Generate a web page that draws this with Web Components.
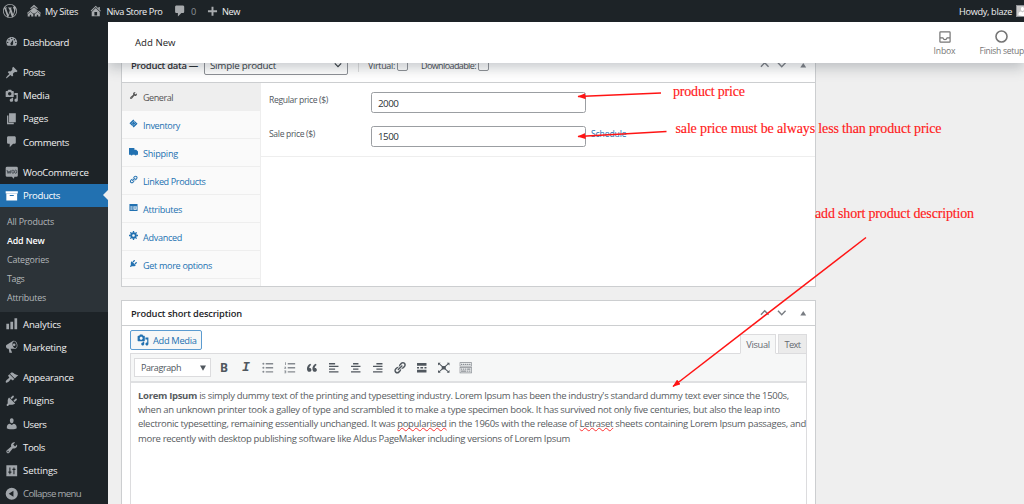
<!DOCTYPE html>
<html lang="en">
<head>
<meta charset="utf-8">
<title>Add New</title>
<style>
    html, body { margin: 0; height: 504px; overflow: hidden; }
    body { background: #efefef; font-family: "Open Sans", "Noto Sans", sans-serif; font-size: 9.5px; color: #50575e; }
</style>
</head>
<body>
<store-admin></store-admin>
<script>
const ICONS = {
    wordpress: '<path d="M20 10c0-5.51-4.49-10-10-10C4.48 0 0 4.49 0 10c0 5.52 4.48 10 10 10 5.51 0 10-4.48 10-10zM7.78 15.37L4.37 6.22c.55-.02 1.17-.08 1.17-.08.5-.06.44-1.13-.06-1.11 0 0-1.45.11-2.37.11-.18 0-.37 0-.58-.01C4.12 2.69 6.87 1.11 10 1.11c2.33 0 4.45.87 6.05 2.34-.68-.11-1.65.39-1.65 1.58 0 .74.45 1.36.9 2.1.35.61.55 1.36.55 2.46 0 1.49-1.4 5-1.4 5l-3.03-8.37c.54-.02.82-.17.82-.17.5-.05.44-1.25-.06-1.22 0 0-1.44.12-2.38.12-.87 0-2.33-.12-2.33-.12-.5-.03-.56 1.2-.06 1.22l.92.08 1.26 3.41zM17.41 10c.24-.64.74-1.87.43-4.25.7 1.29 1.05 2.71 1.05 4.25 0 3.29-1.73 6.24-4.4 7.78.97-2.59 1.94-5.2 2.92-7.78zM6.1 18.09C3.12 16.65 1.11 13.53 1.11 10c0-1.3.23-2.48.72-3.59C3.25 10.3 4.67 14.2 6.1 18.09zm4.03-6.63l2.58 6.98c-.86.29-1.76.45-2.71.45-.79 0-1.57-.11-2.29-.33.81-2.38 1.62-4.74 2.42-7.1z"/>',
    sites: '<path d="M10 1.200l5.500 5-1 1L10 3.500 5.500 7.200l-1-1zM6 8l4-3.500L14 8v2l-4 3-4-3zM5 8.500l5 4.500-.8 1L5 10.500.8 14 0 13zM15 8.500l5 4.500-.8 1-4.200-3.500-4.200 3.500-.8-1zM1 14.500L5 11l4 3.500V18H6v-2.500H4V18H1zM11 14.500l4-3.500 4 3.500V18h-3v-2.500h-2V18h-3z"/>',
    home: '<path d="M16 8.5l1.53 1.53-1.06 1.06L10 4.6l-6.47 6.49-1.06-1.06L10 2.5l4 4v-2h2v4zm-6-2.46l6 5.99V18H4v-5.97zM12 17v-5H8v5h4z"/>',
    comment: '<path d="M5 2h9c1.1 0 2 .9 2 2v7c0 1.1-.9 2-2 2h-2l-5 5v-5H5c-1.1 0-2-.9-2-2V4c0-1.1.9-2 2-2z"/>',
    plus: '<path d="M17 8v3h-5.500v5.500h-3V11H3V8h5.500V2.500h3V8z"/>',
    dashboard: '<path fill-rule="evenodd" d="M3.76 16h12.48c1.1-1.37 1.76-3.11 1.76-5 0-4.42-3.58-8-8-8s-8 3.58-8 8c0 1.89.66 3.63 1.76 5zM10 4c.55 0 1 .45 1 1s-.45 1-1 1-1-.45-1-1 .45-1 1-1zM6 6c.55 0 1 .45 1 1s-.45 1-1 1-1-.45-1-1 .45-1 1-1zm8 0c.55 0 1 .45 1 1s-.45 1-1 1-1-.45-1-1 .45-1 1-1zm-5.370 5.550L12 7v6c0 1.100-.9 2-2 2s-2-.9-2-2c0-.57.24-1.080.63-1.450zM4 10c.55 0 1 .45 1 1s-.45 1-1 1-1-.45-1-1 .45-1 1-1zm12 0c.55 0 1 .45 1 1s-.45 1-1 1-1-.45-1-1 .45-1 1-1z"/>',
    post: '<path d="M10.44 3.02l1.82-1.82 6.36 6.35-1.83 1.82c-1.05-.68-2.48-.57-3.41.36l-.75.75c-.92.93-1.04 2.35-.35 3.41l-1.83 1.82-2.41-2.41-2.8 2.79c-.42.42-3.38 2.71-3.8 2.29s1.86-3.39 2.28-3.81l2.79-2.79L4.1 9.36l1.83-1.82c1.05.69 2.48.57 3.4-.36l.75-.75c.93-.92 1.05-2.35.36-3.41z"/>',
    media: '<path d="M13 11V4c0-.55-.45-1-1-1h-1.67L9 1H5L3.67 3H2c-.55 0-1 .45-1 1v7c0 .55.45 1 1 1h10c.55 0 1-.45 1-1zM7 4.500c1.380 0 2.500 1.120 2.500 2.500S8.380 9.500 7 9.500 4.500 8.380 4.500 7 5.620 4.500 7 4.500zM14 6h5v10.500c0 1.380-1.120 2.500-2.500 2.500S14 17.880 14 16.500s1.120-2.500 2.500-2.500c.17 0 .34.02.5.05V9h-3V6zm-4 8.050V13h2v3.500c0 1.380-1.120 2.500-2.500 2.500S7 17.880 7 16.500 8.120 14 9.500 14c.17 0 .34.02.5.05z" fill-rule="evenodd"/>',
    page: '<path d="M6 15V2h10v13H6zm-1 1h8v2H3V5h2v11z"/>',
    woo: '<path fill-rule="evenodd" d="M3 1h14q2 0 2 2v11q0 2-2 2h-3l-1 3-3-3H3q-2 0-2-2V3q0-2 2-2z"/><path d="M3 6l1.500 5L6 7.500 7.500 11 9 6" fill="none" stroke="#3c434a" stroke-width="1.300"/><ellipse cx="11.800" cy="8.500" rx="1.600" ry="2.500" fill="none" stroke="#3c434a" stroke-width="1.200"/><ellipse cx="15.800" cy="8.500" rx="1.500" ry="2.500" fill="none" stroke="#3c434a" stroke-width="1.200"/>',
    archive: '<path d="M19 3.500v3H1v-3h18zM2 7h16v10H2V7zm11 3.500V9H7v1.500h6z"/>',
    chart: '<path d="M18 18V2h-4v16h4zm-6 0V7H8v11h4zm-6 0v-8H2v8h4z"/>',
    megaphone: '<path d="M18.15 5.94c.46 1.62.38 3.22-.02 4.48-.42 1.28-1.26 2.18-2.3 2.48-.16.06-.26.06-.4.06-.06.02-.12.02-.18.02-.06.02-.14.02-.22.02h-6.8l2.22 5.5c.02.14-.06.26-.14.34-.08.1-.24.16-.34.16H6.950c-.1 0-.26-.06-.34-.16-.08-.08-.16-.2-.14-.34l-1-5.500H4.250l-.02-.02c-.5.06-1.080-.18-1.540-.62s-.88-1.080-1.060-1.880c-.24-.8-.2-1.560-.02-2.200.18-.62.58-1.080 1.060-1.300l.02-.02 9-5.400c.1-.06.18-.1.24-.16.06-.04.14-.08.24-.12.16-.08.28-.12.5-.18 1.040-.3 2.240.1 3.220.98s1.840 2.240 2.260 3.860zm-2.580 5.980h-.02c.4-.1.74-.34 1.040-.7.58-.7.86-1.760.86-3.040 0-.64-.1-1.300-.28-1.980-.34-1.360-1.020-2.500-1.780-3.240s-1.680-1.100-2.460-.88c-.82.22-1.400.96-1.700 2-.32 1.040-.28 2.360.06 3.720.38 1.360 1 2.500 1.800 3.240.78.74 1.620 1.100 2.480.88z" fill-rule="evenodd"/><circle cx="13.500" cy="7" r="2"/>',
    brush: '<path d="M14.48 11.06L7.41 3.99l1.5-1.5c.5-.56 2.3-.47 3.51.32 1.21.8 1.43 1.28 2.91 2.1 1.18.64 2.45 1.26 4.45.85zm-.71.71L6.7 4.7 4.93 6.47c-.39.39-.39 1.02 0 1.41l1.06 1.06c.39.39.39 1.03 0 1.42-.6.6-1.43 1.11-2.21 1.69-.35.26-.7.53-1.01.84C1.43 14.23.4 16.08 1.4 17.07c.99 1 2.84-.03 4.18-1.36.31-.31.58-.66.85-1.02.57-.78 1.08-1.61 1.69-2.21.39-.39 1.02-.39 1.41 0l1.06 1.06c.39.39 1.02.39 1.41 0z"/>',
    plug: '<path d="M13.11 4.36L9.87 7.6 8 5.73l3.24-3.24c.35-.34 1.05-.2 1.56.32.52.51.66 1.21.31 1.55zm-8 1.77l.91-1.12 9.01 9.01-1.19.84c-.71.71-2.63 1.16-3.82 1.16H6.14L4.9 17.26c-.59.59-1.54.59-2.12 0-.59-.58-.59-1.53 0-2.12l1.24-1.24v-3.88c0-1.13.4-3.19 1.09-3.89zm7.26 3.97l3.24-3.24c.34-.35 1.04-.21 1.55.31.52.51.66 1.21.31 1.55l-3.24 3.25z"/>',
    user: '<path d="M10 9.25c-2.27 0-2.73-3.44-2.73-3.44C7 4.02 7.82 2 9.97 2c2.16 0 2.98 2.02 2.71 3.81 0 0-.41 3.44-2.68 3.44zm0 2.57L12.72 10c2.39 0 4.52 2.33 4.52 4.53v2.49s-3.65 1.13-7.24 1.13c-3.65 0-7.24-1.13-7.24-1.13v-2.49c0-2.25 1.94-4.48 4.47-4.48z"/>',
    wrench: '<path d="M16.68 9.77c-1.34 1.34-3.3 1.67-4.95.99l-5.41 6.52c-.99.99-2.59.99-3.58 0s-.99-2.59 0-3.57l6.52-5.42c-.68-1.65-.35-3.61.99-4.95 1.28-1.28 3.12-1.62 4.72-1.06l-2.89 2.89 2.82 2.82 2.86-2.87c.53 1.58.18 3.39-1.08 4.65zM3.81 16.21c.4.39 1.04.39 1.43 0 .4-.4.4-1.04 0-1.43-.39-.4-1.03-.4-1.43 0-.39.39-.39 1.03 0 1.43z"/>',
    sliders: '<path fill-rule="evenodd" d="M2 2h16v16H2zM6.500 5v6H5v2h1.500v2h1.500v-2h1.500v-2H8V5zM12.500 5v2H11v2h1.500v6H14V9h1.500V7H14V5z"/>',
    collapse: '<path d="M10 1a9 9 0 1 1 0 18 9 9 0 0 1 0-18zm2.500 13.500v-9L5.500 10z" fill-rule="evenodd"/>',
    ticket: '<path d="M1 9.500L9.500 1l2 2a2 2 0 0 0 2.500 2.500l5 5L10.500 19l-2-2A2 2 0 0 0 6 14.500z"/><path d="M6 9.500l4-4 4.500 4.500-4 4z" fill="none" stroke="#fff" stroke-width=".8"/>',
    truck: '<path d="M0 2h12v4h4l4 4v7h-3a2.300 2.300 0 0 1-4.500 0H8a2.300 2.300 0 0 1-4.500 0H0z"/>',
    link: '<path d="M17.74 2.76c1.68 1.69 1.68 4.41 0 6.1l-1.53 1.52c-1.12 1.12-2.7 1.47-4.14 1.09l2.62-2.61.76-.77.76-.76c.84-.84.84-2.2 0-3.04-.84-.85-2.2-.85-3.04 0l-.77.76-3.38 3.38c-.37-1.44-.02-3.02 1.1-4.14l1.52-1.53c1.69-1.68 4.42-1.68 6.1 0zM8.59 13.43l5.34-5.34c.42-.42.42-1.1 0-1.52-.44-.43-1.13-.39-1.53 0l-5.33 5.34c-.42.42-.42 1.1 0 1.52.44.43 1.13.39 1.52 0zm-.76 2.29l4.14-4.15c.38 1.44.03 3.02-1.09 4.14l-1.52 1.53c-1.69 1.68-4.41 1.68-6.1 0-1.68-1.68-1.68-4.42 0-6.1l1.53-1.52c1.12-1.12 2.7-1.47 4.14-1.1l-4.14 4.15c-.85.84-.85 2.2 0 3.05.84.84 2.2.84 3.04 0z"/>',
    table: '<path fill-rule="evenodd" d="M1 2h18v16H1zM3 7v1.500h5V7zM3 10v1.500h5V10zM3 13v1.500h5V13zM10 7v8h7V7zM11.500 8.500h4v1.500h-4zM11.500 12h4v1.500h-4z"/>',
    gear: '<circle cx="10" cy="10" r="5" fill="none" stroke="currentColor" stroke-width="4"/><path d="M8.500 0h3v4h-3zM8.500 16h3v4h-3zM0 8.500h4v3H0zM16 8.500h4v3h-4zM2 4l2-2 3 3-2 2zM13 15l2-2 3 3-2 2zM2 16l3-3 2 2-3 3zM13 5l3-3 2 2-3 3z"/>',
    ul: '<circle cx="3.500" cy="4" r="1.500"/><circle cx="3.500" cy="10" r="1.500"/><circle cx="3.500" cy="16" r="1.500"/><path d="M7 3h11v2H7zM7 9h11v2H7zM7 15h11v2H7z"/>',
    ol: '<path d="M3 2h1.200v4H3zM2 8.500h2.500v1.200L3.200 11h1.500v1H2v-1l1.300-1.500H2zM2 14h2.700v4H2v-1h1.600v-.6H2.500v-.8h1.100V15H2zM7 3h11v2H7zM7 9h11v2H7zM7 15h11v2H7z"/>',
    quote: '<path d="M9.49 13.22c0-.74-.2-1.38-.61-1.9-.62-.78-1.83-.88-2.53-.72-.29-1.65 1.11-3.75 2.92-4.65L7.88 4c-2.73 1.3-5.42 4.28-4.96 8.05C3.21 14.43 4.59 16 6.54 16c.85 0 1.56-.25 2.12-.75s.83-1.18.83-2.03zm8.05 0c0-.74-.2-1.38-.61-1.9-.63-.78-1.83-.88-2.53-.72-.29-1.65 1.11-3.75 2.92-4.65L15.93 4c-2.73 1.3-5.41 4.28-4.95 8.05.29 2.38 1.66 3.95 3.61 3.95.85 0 1.56-.25 2.12-.75s.83-1.18.83-2.03z"/>',
    left: '<path d="M12 5V3H3v2h9zm5 4V7H3v2h14zm-5 4v-2H3v2h9zm5 4v-2H3v2h14z"/>',
    center: '<path d="M14 5V3H6v2h8zm3 4V7H3v2h14zm-3 4v-2H6v2h8zm3 4v-2H3v2h14z"/>',
    right: '<path d="M17 5V3H8v2h9zm0 4V7H3v2h14zm0 4v-2H8v2h9zm0 4v-2H3v2h14z"/>',
    more: '<path d="M17 7V3H3v4h14zM6 11V9H3v2h3zm6 0V9H8v2h4zm5 0V9h-3v2h3zm0 6v-4H3v4h14z"/>',
    full: '<path d="M7 7.500h6v5H7z"/><path d="M3 4l14 12M17 4L3 16" stroke="currentColor" stroke-width="1.500"/><path d="M1.500 2.500h4l-4 4zM18.500 2.500v4l-4-4zM1.500 17.500v-4l4 4zM18.500 17.500h-4l4-4z"/>',
    sink: '<path d="M19 2v6H1V2h18zm-1 5V3H2v4h16zM5 4v2H3V4h2zm3 0v2H6V4h2zm3 0v2H9V4h2zm3 0v2h-2V4h2zm3 0v2h-2V4h2zm2 5v9H1V9h18zm-1 8v-7H2v7h16zM5 11v2H3v-2h2zm3 0v2H6v-2h2zm3 0v2H9v-2h2zm6 0v2h-5v-2h5zm-6 3v2H3v-2h8zm3 0v2h-2v-2h2zm3 0v2h-2v-2h2z"/>',
    inbox: '<path d="M2.500 1.500h15q1 0 1 1v15q0 1-1 1h-15q-1 0-1-1v-15q0-1 1-1zM2 11.500h4.500q1 3 3.500 3t3.500-3H18" fill="none" stroke="currentColor" stroke-width="2"/>',
    circle: '<circle cx="10" cy="10" r="8.500" fill="none" stroke="currentColor" stroke-width="2.400"/>',
    up: '<path d="M2 14l8-8 8 8" fill="none" stroke="currentColor" stroke-width="3"/>',
    down: '<path d="M2 6l8 8 8-8" fill="none" stroke="currentColor" stroke-width="3"/>',
    toggle: '<path d="M10 3l9 14H1z"/>',
    caret: '<path d="M0 2h20L10 19z"/>'
};

class UiIcon extends HTMLElement {
    constructor() {
        super();
        this.attachShadow({mode: 'open'});
    }

    connectedCallback() {
        const size = this.getAttribute('size') || 13;
        this.shadowRoot.innerHTML = `
            <style>
                :host { display: block; flex: none; width: ${size}px; height: ${size}px; }
                svg { display: block; width: 100%; height: 100%; fill: currentColor; overflow: visible; }
            </style>
            <svg viewBox="0 0 20 20">${ICONS[this.getAttribute('name')]}</svg>
        `;
    }
}

// One line of text, tracked so that it fills the width in its "w" attribute.
class UiText extends HTMLElement {
    constructor() {
        super();
        this.attachShadow({mode: 'open'});
    }

    connectedCallback() {
        this.shadowRoot.innerHTML = `
            <style>:host { display: inline-block; flex: none; white-space: nowrap; }</style>
            <span><slot></slot></span>
        `;
        const width = parseFloat(this.getAttribute('w'));
        if (!width) return;
        const natural = this.shadowRoot.querySelector('span').getBoundingClientRect().width;
        this.style.letterSpacing = (width - natural) / this.textContent.length + 'px';
    }
}

class AdminBar extends HTMLElement {
    constructor() {
        super();
        this.attachShadow({mode: 'open'});
    }

    connectedCallback() {
        this.shadowRoot.innerHTML = `
            <style>
                :host { display: flex; align-items: center; height: 22px; background: #1d2327; color: #f0f0f1; font-size: 9.2px; overflow: hidden; }
                ui-icon { color: #a7aaad; }
                .item { display: flex; align-items: center; gap: 4px; }
                .grow { flex: 1; }
                .count { color: #8c9196; }
                .avatar { width: 10px; height: 10px; margin: 0 -4px 0 4px; background: #c9c9c9; border: 1px solid #8c8f94; overflow: hidden; }
                .avatar ui-icon { color: #fff; }
            </style>
            <ui-icon name="wordpress" size="14" style="margin:0 10px 0 3px"></ui-icon>
            <div class="item" style="margin-right:11px"><ui-icon name="sites" size="14"></ui-icon><ui-text w="33">My Sites</ui-text></div>
            <div class="item" style="margin-right:10.500px"><ui-icon name="home" size="13.500"></ui-icon><ui-text w="56">Niva Store Pro</ui-text></div>
            <div class="item" style="margin-right:10.500px"><ui-icon name="comment" size="14"></ui-icon><ui-text class="count" w="5.500">0</ui-text></div>
            <div class="item" style="gap:3.500px;margin-left:-1.500px"><ui-icon name="plus" size="13"></ui-icon><ui-text w="18">New</ui-text></div>
            <div class="grow"></div>
            <ui-text w="53">Howdy, blaze</ui-text>
            <div class="avatar"><ui-icon name="user" size="11"></ui-icon></div>
        `;
    }
}

class MenuItem extends HTMLElement {
    constructor() {
        super();
        this.attachShadow({mode: 'open'});
    }

    connectedCallback() {
        this.shadowRoot.innerHTML = `
            <style>
                :host { display: flex; align-items: center; gap: 5px; height: 23.150px; padding-left: 4.500px; box-sizing: border-box; color: #f0f0f1; position: relative; }
                ui-icon { color: #a0a5aa; }
                :host([current]) { background: #2271b1; color: #fff; }
                :host([current]) ui-icon { color: #fff; }
                :host([current])::after { content: ""; position: absolute; right: 0; top: 6px; border: 5.500px solid transparent; border-left: 0; border-right-color: #efefef; }
                :host([muted]) { color: #a7aaad; }
            </style>
            <ui-icon name="${this.getAttribute('icon')}" size="13.500"></ui-icon>
            <slot></slot>
        `;
    }
}

class AdminMenu extends HTMLElement {
    constructor() {
        super();
        this.attachShadow({mode: 'open'});
    }

    connectedCallback() {
        const item = ([icon, label, w, extra = '']) =>
            `<menu-item icon="${icon}" ${extra}><ui-text w="${w}">${label}</ui-text></menu-item>`;
        this.shadowRoot.innerHTML = `
            <style>
                :host { display: block; width: 108px; height: 482px; background: #1d2327; font-size: 9.6px; overflow: hidden; }
                .gap { height: 7.500px; }
                .sub { height: 105px; padding: 4.500px 0 0 7px; box-sizing: border-box; background: #2c3338; color: #b4b8bc; font-size: 8.9px; }
                .sub div { height: 19px; display: flex; align-items: center; }
                .sub .on { color: #fff; font-weight: 600; }
            </style>
            <div style="height:8.500px"></div>
            ${item(['dashboard', 'Dashboard', 46])}
            <div class="gap"></div>
            ${[['post', 'Posts', 22], ['media', 'Media', 26.5], ['page', 'Pages', 25], ['comment', 'Comments', 46]].map(item).join('')}
            <div class="gap"></div>
            ${[['woo', 'WooCommerce', 65.5], ['archive', 'Products', 37, 'current']].map(item).join('')}
            <div class="sub">
                <div><ui-text w="47">All Products</ui-text></div>
                <div class="on"><ui-text w="37.500">Add New</ui-text></div>
                <div><ui-text w="42">Categories</ui-text></div>
                <div><ui-text w="17.500">Tags</ui-text></div>
                <div><ui-text w="39">Attributes</ui-text></div>
            </div>
            ${[['chart', 'Analytics', 38], ['megaphone', 'Marketing', 43.5]].map(item).join('')}
            <div class="gap"></div>
            ${[['brush', 'Appearance', 50.5], ['plug', 'Plugins', 31], ['user', 'Users', 23.5], ['wrench', 'Tools', 22], ['sliders', 'Settings', 34.5], ['collapse', 'Collapse menu', 58, 'muted']].map(item).join('')}
        `;
    }
}

class PageHeader extends HTMLElement {
    constructor() {
        super();
        this.attachShadow({mode: 'open'});
    }

    connectedCallback() {
        this.shadowRoot.innerHTML = `
            <style>
                :host { display: flex; align-items: center; position: relative; z-index: 2; height: 41px; padding-left: 27px; background: #fff; color: #1e1e1e; box-shadow: 0 5px 12px rgba(85, 93, 102, .32); box-sizing: border-box; font-size: 9.6px; }
                .grow { flex: 1; }
                .tab { display: flex; flex-direction: column; align-items: center; gap: 2px; color: #757575; font-size: 8.6px; padding-top: 2px; }
                .icon { height: 13px; display: flex; align-items: center; }
            </style>
            <ui-text w="40.500">Add New</ui-text>
            <div class="grow"></div>
            <div class="tab" style="margin-right:24px"><div class="icon"><ui-icon name="inbox" size="12"></ui-icon></div><ui-text w="22">Inbox</ui-text></div>
            <div class="tab"><div class="icon"><ui-icon name="circle" size="13"></ui-icon></div><ui-text w="44.500">Finish setup</ui-text></div>
        `;
    }
}

class MetaBox extends HTMLElement {
    constructor() {
        super();
        this.attachShadow({mode: 'open'});
    }

    connectedCallback() {
        this.shadowRoot.innerHTML = `
            <style>
                :host { display: flex; flex-direction: column; box-sizing: border-box; width: 695px; background: #fff; border: 1px solid #ccced0; }
                header { display: flex; align-items: center; flex: none; box-sizing: border-box; height: var(--head, 25px); padding: var(--drop, 0) 9px 0 9px; border-bottom: 1px solid #ccced0; color: #1d2327; }
                .title { flex: 1; display: flex; align-items: center; }
                .handles { display: flex; align-items: center; color: #787c82; gap: 8px; }
                .body { flex: 1; min-height: 0; display: flex; flex-direction: column; }
            </style>
            <header>
                <div class="title"><slot name="title"></slot></div>
                <div class="handles">
                    <ui-icon name="up" size="9.500"></ui-icon>
                    <ui-icon name="down" size="9.500"></ui-icon>
                    <ui-icon name="toggle" size="6.500" style="margin:0 0 0 5px"></ui-icon>
                </div>
            </header>
            <div class="body"><slot></slot></div>
        `;
    }
}

class ProductData extends HTMLElement {
    constructor() {
        super();
        this.attachShadow({mode: 'open'});
    }

    connectedCallback() {
        const tabs = [['wrench', 'General', 30], ['ticket', 'Inventory', 37], ['truck', 'Shipping', 35], ['link', 'Linked Products', 62.5],
            ['table', 'Attributes', 39], ['gear', 'Advanced', 39], ['plug', 'Get more options', 69]];
        this.shadowRoot.innerHTML = `
            <style>
                :host { display: block; margin-top: -20px; }
                meta-box { height: 244px; --head: 39px; --drop: 4px; }
                .head { display: flex; align-items: center; height: 20px; }
                .select { display: flex; align-items: center; justify-content: space-between; box-sizing: border-box; width: 144px; height: 20px; padding: 0 5px; border: 1px solid #8c8f94; border-radius: 2px; font-size: 9.8px; color: #2c3338; margin-left: 6px; }
                .sep { width: 1px; height: 14px; background: #ddd; margin: 0 9px 0 10px; }
                .box { width: 9px; height: 9px; border: 1px solid #8c8f94; border-radius: 2px; box-sizing: content-box; }
                .flag { display: flex; align-items: center; gap: 2px; color: #3c434a; font-size: 9px; }
                .row { display: flex; flex: 1; min-height: 0; }
                nav { width: 138px; border-right: 1px solid #eee; background: #fafafa; }
                nav div { display: flex; align-items: center; gap: 5px; height: 28px; padding-left: 7px; box-sizing: border-box; border-bottom: 1px solid #eee; color: #2271b1; font-size: 9.1px; }
                nav div:first-child { background: #eee; color: #555; }
                nav ui-icon { margin-top: -1.500px; }
                nav ui-text { margin-top: 1px; }
                .fields { flex: 1; font-size: 8.6px; }
                .field { display: flex; padding-left: 8px; }
                .field ui-text { line-height: 13px; }
                .label { width: 102px; margin-top: 2px; }
                .input { width: 215px; height: 21px; padding-left: 6px; border: 1px solid #9b9ea2; border-radius: 2.500px; box-sizing: border-box; display: flex; align-items: center; font-size: 9.8px; color: #2c3338; padding-top: 1px; }
                .group { height: 74px; box-sizing: border-box; border-bottom: 1px solid #eee; padding-top: 9px; }
                a { color: #2271b1; text-decoration: underline; text-underline-offset: 1px; margin: 2px 0 0 5px; }
            </style>
            <meta-box>
                <div class="head" slot="title">
                    <ui-text w="67" style="font-weight:600">Product data —</ui-text>
                    <div class="select"><ui-text w="66">Simple product</ui-text><ui-icon name="down" size="8"></ui-icon></div>
                    <div class="sep"></div>
                    <div class="flag"><ui-text w="27">Virtual:</ui-text><div class="box"></div></div>
                    <div class="flag" style="margin-left:13px"><ui-text w="55">Downloadable:</ui-text><div class="box"></div></div>
                </div>
                <div class="row">
                    <nav>${tabs.map(([icon, label, w]) => `<div><ui-icon name="${icon}" size="9"></ui-icon><ui-text w="${w}">${label}</ui-text></div>`).join('')}</nav>
                    <div class="fields">
                        <div class="group">
                            <div class="field"><div class="label"><ui-text w="59">Regular price ($)</ui-text></div><div class="input"><ui-text w="20.500">2000</ui-text></div></div>
                            <div class="field" style="margin-top:12.500px"><div class="label"><ui-text w="46">Sale price ($)</ui-text></div><div class="input"><ui-text w="20.500">1500</ui-text></div><a><ui-text w="35.500">Schedule</ui-text></a></div>
                        </div>
                    </div>
                </div>
            </meta-box>
        `;
    }
}

class ShortDescription extends HTMLElement {
    constructor() {
        super();
        this.attachShadow({mode: 'open'});
    }

    connectedCallback() {
        const tools = ['ul', 'ol', 'quote', 'left', 'center', 'right', 'link', 'more', 'full', 'sink'];
        this.shadowRoot.innerHTML = `
            <style>
                :host { display: block; margin-top: 13px; }
                meta-box { height: 230px; }
                .bar { display: flex; justify-content: space-between; height: 27px; margin: 0 8px 0 8px; position: relative; z-index: 1; }
                .add { display: flex; align-items: center; gap: 4px; width: 72px; height: 20px; margin-top: 4px; padding-left: 6px; box-sizing: border-box; border: 1px solid #5b9bd0; border-radius: 2px; background: #f6f7f7; color: #2271b1; font-size: 9.3px; }
                .modes { display: flex; align-items: flex-start; gap: 2px; padding-top: 8px; color: #646970; font-size: 9.3px; }
                .modes div { box-sizing: border-box; height: 20px; border: 1px solid #dcdcde; background: #ebebeb; display: flex; align-items: center; justify-content: center; width: 29px; }
                .modes .on { width: 36px; background: #f6f7f7; border-bottom-color: #f6f7f7; }
                .editor { flex: 1; margin: 0 8px; border: 1px solid #dcdcde; border-bottom: 0; display: flex; flex-direction: column; overflow: hidden; }
                .tools { display: flex; align-items: center; height: 29px; flex: none; padding-left: 3px; background: #f6f7f7; border-bottom: 2px solid #dfe0e2; color: #50575e; box-sizing: border-box; }
                .format { display: flex; align-items: center; justify-content: space-between; width: 77px; height: 19px; padding: 0 4px 0 6px; margin-right: 2px; border: 1px solid #dcdcde; background: #fff; box-sizing: border-box; font-size: 9px; }
                .tool { display: flex; justify-content: center; width: 22px; line-height: 14px; font: 700 12px/14px "Noto Sans", sans-serif; }
                .tool ui-icon { margin-left: -1px; }
                .i { font: italic 700 13px/14px "Liberation Mono", monospace; }
                .light { color: #858a90; }
                .text { padding: 5.500px 0 0 7px; font-size: 9.5px; line-height: 14.400px; color: #585c61; }
                .text ui-text { display: block; height: 14.400px; }
                u { text-decoration: underline wavy #f33 .7px; text-underline-offset: 0; text-decoration-skip-ink: none; }
            </style>
            <meta-box>
                <ui-text slot="title" w="111" style="font-weight:600;font-size:9.300px">Product short description</ui-text>
                <div class="bar">
                    <div class="add"><ui-icon name="media" size="12"></ui-icon><ui-text w="43.500">Add Media</ui-text></div>
                    <div class="modes"><div class="on"><ui-text w="23.500">Visual</ui-text></div><div><ui-text w="16">Text</ui-text></div></div>
                </div>
                <div class="editor">
                    <div class="tools">
                        <div class="format"><ui-text w="40">Paragraph</ui-text><ui-icon name="caret" size="6"></ui-icon></div>
                        <div class="tool">B</div>
                        <div class="tool i">I</div>
                        ${tools.map(name => `<div class="tool ${name === 'ul' || name === 'ol' || name === 'sink' ? 'light' : ''}"><ui-icon name="${name}" size="13.500"></ui-icon></div>`).join('')}
                    </div>
                    <div class="text">
                        <ui-text w="651"><b>Lorem Ipsum</b> is simply dummy text of the printing and typesetting industry. Lorem Ipsum has been the industry's standard dummy text ever since the 1500s,</ui-text>
                        <ui-text w="642">when an unknown printer took a galley of type and scrambled it to make a type specimen book. It has survived not only five centuries, but also the leap into</ui-text>
                        <ui-text w="668">electronic typesetting, remaining essentially unchanged. It was <u>popularised</u> in the 1960s with the release of <u>Letraset</u> sheets containing Lorem Ipsum passages, and</ui-text>
                        <ui-text w="432">more recently with desktop publishing software like Aldus PageMaker including versions of Lorem Ipsum</ui-text>
                    </div>
                </div>
            </meta-box>
        `;
    }
}

// Red callouts drawn over the page.
class CalloutLayer extends HTMLElement {
    constructor() {
        super();
        this.attachShadow({mode: 'open'});
    }

    connectedCallback() {
        this.shadowRoot.innerHTML = `
            <style>
                :host { display: block; position: absolute; left: 0; top: 0; z-index: 5; pointer-events: none; }
                svg { display: block; }
                text { font: 14px "Liberation Serif", serif; fill: #ff1a1a; stroke: #ff1a1a; stroke-width: .15; }
                line { stroke: #ff1414; stroke-width: 1.5; }
            </style>
            <svg width="1024" height="504">
                <defs>
                    <marker id="head" markerUnits="userSpaceOnUse" markerWidth="8" markerHeight="6" refX="7.500" refY="3" orient="auto">
                        <path d="M0 0l8 3-8 3z" fill="#ff1414"/>
                    </marker>
                </defs>
                <line x1="661" y1="93" x2="578" y2="96.500" marker-end="url(#head)"/>
                <line x1="666.500" y1="131.500" x2="578" y2="136.500" marker-end="url(#head)"/>
                <line x1="866" y1="237.500" x2="673" y2="386.500" marker-end="url(#head)"/>
                <text x="673" y="96" textLength="72">product price</text>
                <text x="675.500" y="133" textLength="266">sale price must be always less than product price</text>
                <text x="815" y="217.500" textLength="159">add short product description</text>
            </svg>
        `;
    }
}

class StoreAdmin extends HTMLElement {
    constructor() {
        super();
        this.attachShadow({mode: 'open'});
    }

    connectedCallback() {
        this.shadowRoot.innerHTML = `
            <style>
                :host { display: block; width: 1024px; height: 504px; overflow: hidden; position: relative; }
                .frame { display: flex; height: 482px; }
                main { flex: 1; min-width: 0; overflow: hidden; }
                .content { padding-left: 13px; }
            </style>
            <admin-bar></admin-bar>
            <div class="frame">
                <admin-menu></admin-menu>
                <main>
                    <page-header></page-header>
                    <div class="content">
                        <product-data></product-data>
                        <short-description></short-description>
                    </div>
                </main>
            </div>
            <callout-layer></callout-layer>
        `;
    }
}

customElements.define('store-admin', StoreAdmin);
customElements.define('admin-bar', AdminBar);
customElements.define('admin-menu', AdminMenu);
customElements.define('menu-item', MenuItem);
customElements.define('page-header', PageHeader);
customElements.define('product-data', ProductData);
customElements.define('short-description', ShortDescription);
customElements.define('meta-box', MetaBox);
customElements.define('callout-layer', CalloutLayer);
customElements.define('ui-icon', UiIcon);
// last, so that every surrounding style is in place when the text is measured
customElements.define('ui-text', UiText);
</script>
</body>
</html>
